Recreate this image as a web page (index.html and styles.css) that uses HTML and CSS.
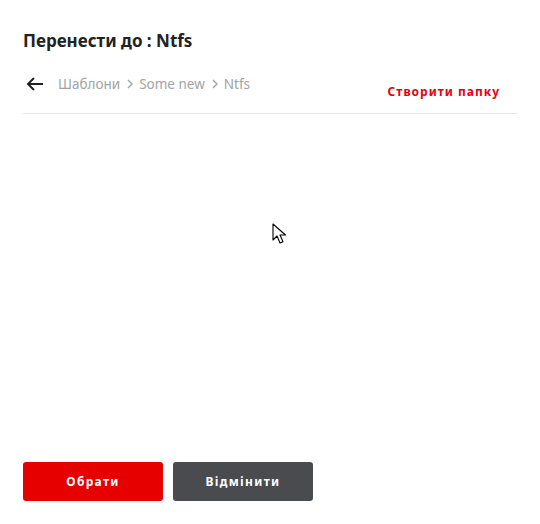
FILE: index.html
```html
<!DOCTYPE html>
<html lang="uk">
<head>
<meta charset="utf-8">
<link rel="stylesheet" href="styles.css">
</head>
<body>
<div class="dialog">
  <h1 class="title">Перенести до : Ntfs</h1>
  <div class="nav">
    <div class="crumbs">
      <svg class="back" width="18" height="14" viewBox="0 0 18 14"><path d="M17 7H2M8 1L2 7l6 6" fill="none" stroke="#222" stroke-width="2"/></svg>
      <span class="crumb">Шаблони</span>
      <svg class="sep" width="6" height="10" viewBox="0 0 6 10"><path d="M1 1l4 4-4 4" fill="none" stroke="#a3a3a3" stroke-width="1.4"/></svg><span class="crumb">Some new</span>
      <svg class="sep" width="6" height="10" viewBox="0 0 6 10"><path d="M1 1l4 4-4 4" fill="none" stroke="#a3a3a3" stroke-width="1.4"/></svg><span class="crumb">Ntfs</span>
    </div>
    <a class="create">Створити папку</a>
  </div>
  <div class="list"></div>
  <div class="actions">
    <button class="btn btn-primary">Обрати</button>
    <button class="btn btn-secondary">Відмінити</button>
  </div>
</div>
<svg class="cursor" width="14" height="22" viewBox="0 0 14 22"><path d="M1 1v16l4-4 3 7 3-1.3-3-6.7h5.5z" fill="#fff" stroke="#000" stroke-width="1.1" stroke-linejoin="round"/></svg>
</body>
</html>
```
FILE: styles.css
```css
* { box-sizing: border-box; }
html, body { margin: 0; padding: 0; background: #fff; }
body { font-family: "Noto Sans", "Open Sans", sans-serif; width: 540px; height: 524px; position: relative; }
.dialog { display: flex; flex-direction: column; height: 524px; padding: 29px 23px 23px 23px; }
.title { margin: 0; font-size: 17px; font-weight: 700; color: #222; line-height: 24px; }
.nav { display: flex; justify-content: space-between; align-items: flex-start; margin-top: 21px; padding-bottom: 12px; border-bottom: 1px solid #e6e6e6; padding-right: 17px; }
.crumbs { display: flex; align-items: center; height: 20px; color: #a3a3a3; font-size: 13.5px; }
.back { margin: 0 14px 0 3px; }
.sep { margin: 0 6px 0 7px; }
.create { margin-top: 9px; color: #e3000f; font-size: 12px; font-weight: 700; letter-spacing: 1px; line-height: 18px; }
.list { flex: 1; }
.actions { display: flex; gap: 10px; }
.btn { width: 140px; height: 39px; border: 0; border-radius: 3px; color: #fff; font-family: inherit; font-size: 12px; font-weight: 700; letter-spacing: 1.3px; }
.btn-primary { background: #e60000; }
.btn-secondary { background: #4a4b4f; }
.cursor { position: absolute; left: 272px; top: 223px; }
```
